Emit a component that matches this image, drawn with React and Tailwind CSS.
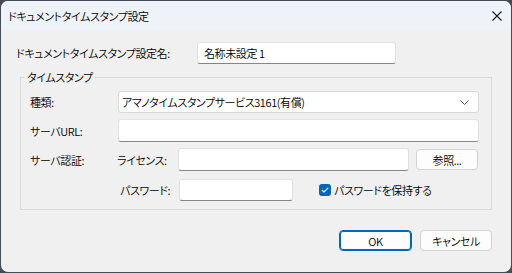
import React from "react";

const font = {
  fontFamily: '"Noto Sans CJK JP", "Noto Sans", sans-serif',
};

function TextBox({ className = "", children }) {
  return (
    <div
      className={
        "flex items-center rounded-[3px] border border-[#e2e2e2] border-b-[#868686] bg-white px-[6px] " +
        className
      }
    >
      {children}
    </div>
  );
}

function Button({ primary, className = "", children }) {
  return (
    <div
      className={
        "flex items-center justify-center rounded-[4px] " +
        (primary
          ? "border border-[#0067c0] shadow-[inset_0_0_0_1px_#0067c0] bg-[#fdfdfd] "
          : "border border-[#d3d3d3] bg-[#fdfdfd] ") +
        className
      }
    >
      {children}
    </div>
  );
}

export default function App() {
  return (
    <div
      className="h-[273px] w-[512px] bg-[#454c58] p-px text-[11px] leading-[16px] font-[350] tracking-[-0.4px] text-black [font-feature-settings:'palt']"
      style={font}
    >
      <div className="flex h-full w-full flex-col overflow-hidden rounded-[7px] bg-[#f0f0f0]">
        {/* Title bar */}
        <div className="flex h-[30px] shrink-0 items-center justify-between bg-[#eef3f9] pl-[7px] pr-[10px]">
          <span>ドキュメントタイムスタンプ設定</span>
          <svg width="10" height="10" viewBox="0 0 10 10" className="mr-[-1px]">
            <path d="M0.5 0.5L9.5 9.5M9.5 0.5L0.5 9.5" stroke="#1b1b1b" strokeWidth="1.1" />
          </svg>
        </div>

        {/* Body */}
        <div className="flex flex-1 flex-col">
          <div className="mt-[11px] flex items-center pl-[15px]">
            <span className="w-[181px]">ドキュメントタイムスタンプ設定名:</span>
            <TextBox className="h-[22px] w-[199px]">名称未設定 1</TextBox>
          </div>

          <fieldset className="ml-[19px] mt-[5px] h-[141px] w-[472px] border border-[#dadada] pb-[7px] pl-[9px]">
            <legend className="ml-[-5px] px-[2px]">タイムスタンプ</legend>

            <div className="mt-[6px] flex items-center">
              <span className="w-[88px]">種類:</span>
              <div className="flex h-[22px] w-[361px] items-center justify-between rounded-[3px] border border-[#d9d9d9] bg-white pl-[3px] pr-[9px]">
                <span>アマノタイムスタンプサービス3161(有償)</span>
                <svg width="9" height="5" viewBox="0 0 9 5">
                  <path d="M0.5 0.5L4.5 4.5L8.5 0.5" stroke="#5a5a5a" fill="none" />
                </svg>
              </div>
            </div>

            <div className="mt-[6px] flex items-center">
              <span className="w-[88px]">サーバURL:</span>
              <TextBox className="h-[23px] w-[361px]" />
            </div>

            <div className="mt-[6px] flex items-center">
              <span className="w-[87px]">サーバ認証:</span>
              <span className="w-[61px]">ライセンス:</span>
              <TextBox className="h-[23px] w-[231px]" />
              <Button className="ml-[7px] h-[21px] w-[62px]">参照...</Button>
            </div>

            <div className="mt-[8px] flex items-center">
              <span className="ml-[90px] w-[59px]">パスワード:</span>
              <TextBox className="h-[22px] w-[114px]" />
              <div className="ml-[26px] flex h-[12px] w-[12px] items-center justify-center rounded-[3px] bg-[#0067c0]">
                <svg width="8" height="6" viewBox="0 0 8 6">
                  <path d="M0.8 3L3 5L7.2 0.8" stroke="white" strokeWidth="1.1" fill="none" />
                </svg>
              </div>
              <span className="ml-[3px]">パスワードを保持する</span>
            </div>
          </fieldset>

          <div className="mt-[20px] flex justify-end gap-[8px] pr-[19px]">
            <Button primary className="h-[21px] w-[73px]">OK</Button>
            <Button className="h-[21px] w-[72px]">キャンセル</Button>
          </div>
        </div>
      </div>
    </div>
  );
}
